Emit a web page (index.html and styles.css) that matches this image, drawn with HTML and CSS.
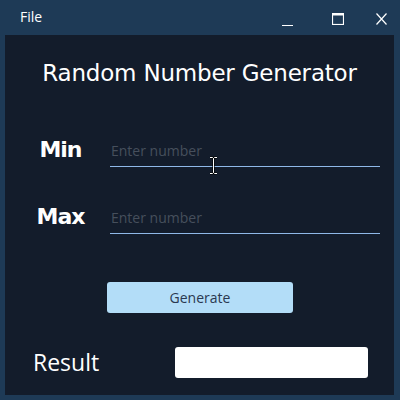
FILE: index.html
```html
<!DOCTYPE html>
<html>
<head>
<meta charset="utf-8">
<link rel="stylesheet" href="styles.css">
</head>
<body>
<div class="window">
  <div class="titlebar">
    <span class="menu">File</span>
    <div class="controls">
      <span class="ctl min"><svg width="11" height="12" viewBox="0 0 11 12"><path d="M0 11.5H11" stroke="#fff" stroke-width="1"/></svg></span>
      <span class="ctl max"><svg width="12" height="12" viewBox="0 0 12 12"><rect x="0.5" y="0.5" width="11" height="11" fill="none" stroke="#fff" stroke-width="1.2"/><path d="M0.5 1.5H11.5" stroke="#fff" stroke-width="2"/></svg></span>
      <span class="ctl close"><svg width="11" height="12" viewBox="0 0 11 12"><path d="M0.5 0.5L10.5 11.5M10.5 0.5L0.5 11.5" stroke="#fff" stroke-width="1.2"/></svg></span>
    </div>
  </div>
  <div class="panel">
    <h1 class="heading">Random Number Generator</h1>
    <div class="row row-min">
      <label class="label">Min</label>
      <div class="field"><span class="placeholder">Enter number</span></div>
    </div>
    <div class="row row-max">
      <label class="label">Max</label>
      <div class="field"><span class="placeholder">Enter number</span></div>
    </div>
    <div class="actions">
      <button class="btn">Generate</button>
    </div>
    <div class="result">
      <span class="result-label">Result</span>
      <div class="result-box"></div>
    </div>
    <svg class="cursor" width="9" height="19" viewBox="0 0 9 19"><path d="M1 1.5H3.5L4.5 2.5L5.5 1.5H8M4.5 2.5V16.5M1 17.5H3.5L4.5 16.5L5.5 17.5H8" stroke="#000" stroke-width="2.2" fill="none"/><path d="M1 1.5H3.5L4.5 2.5L5.5 1.5H8M4.5 2.5V16.5M1 17.5H3.5L4.5 16.5L5.5 17.5H8" stroke="#fff" stroke-width="1" fill="none"/></svg>
  </div>
</div>
</body>
</html>
```
FILE: styles.css
```css
html, body { margin: 0; padding: 0; }
body {
  width: 400px;
  height: 400px;
  background: #1e3a56;
  overflow: hidden;
  font-family: "Open Sans", "Noto Sans", sans-serif;
}
.window { display: flex; flex-direction: column; height: 400px; }
.titlebar {
  height: 35px;
  display: flex;
  align-items: flex-start;
  justify-content: space-between;
  color: #fff;
}
.menu { font-size: 14px; margin: 7px 0 0 20px; line-height: 20px; }
.controls { display: flex; margin-top: 13px; margin-right: 13px; }
.ctl { display: block; height: 12px; }
.ctl svg { display: block; }
.min { margin-right: 39px; transform: translateY(1px); }
.max { margin-right: 32px; }
.panel {
  position: relative;
  margin: 0 6px 5px 5px;
  flex: 1;
  background: #131c2b;
  display: flex;
  flex-direction: column;
}
.heading {
  margin: 22px 0 0 0;
  font-family: "DejaVu Sans", sans-serif;
  font-weight: normal;
  font-size: 23px;
  letter-spacing: -0.2px;
  line-height: 32px;
  text-align: center;
  color: #fff;
  padding-left: 0;
}
.row {
  display: grid;
  grid-template-columns: 105px 270px;
  align-items: end;
  height: 35px;
}
.row-min { margin-top: 43px; }
.row-max { margin-top: 32px; }
.label {
  font-family: "DejaVu Sans", sans-serif;
  font-weight: bold;
  font-size: 22px;
  letter-spacing: -1px;
  color: #fff;
  text-align: center;
  line-height: 32px;
  align-self: center;
  padding-left: 6px;
}
.field {
  height: 31px;
  border-bottom: 1px solid #8fb8e8;
  display: flex;
  align-items: center;
}
.placeholder { font-size: 14px; color: #464f5c; padding-left: 1px; }
.actions { display: flex; margin-top: 48px; padding-left: 102px; }
.btn {
  width: 186px;
  height: 31px;
  border: none;
  border-radius: 3px;
  background: #b3ddf8;
  color: #2a3850;
  font-family: "Open Sans", sans-serif;
  font-size: 14px;
  padding: 0;
}
.result {
  display: flex;
  align-items: center;
  margin-top: 33px;
}
.result-label {
  font-size: 23px;
  color: #fff;
  width: 170px;
  padding-left: 28px;
  box-sizing: border-box;
}
.result-box {
  width: 193px;
  height: 31px;
  background: #fff;
  border-radius: 3px;
}
.cursor { position: absolute; left: 204px; top: 121px; }
```
